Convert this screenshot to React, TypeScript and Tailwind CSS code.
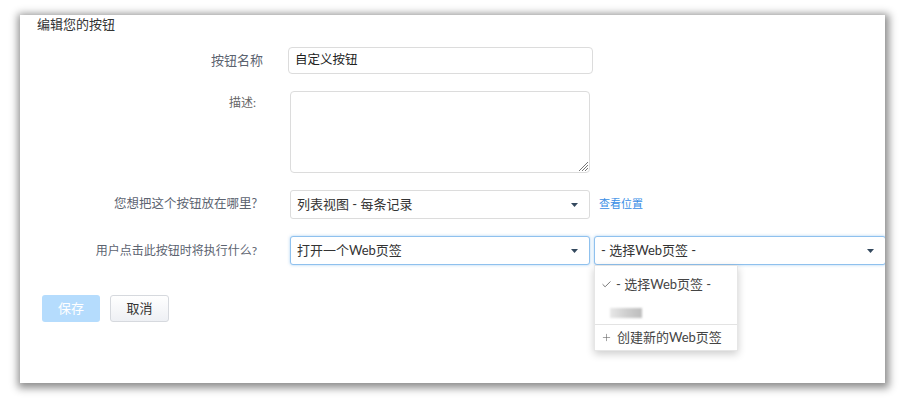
import { Check, Plus } from "lucide-react";

const font = { fontFamily: 'Lato, "Noto Sans CJK SC", sans-serif' };

function Caret() {
    return (
        <svg width="7" height="4" viewBox="0 0 7 4" className="shrink-0">
            <path d="M0 0 L7 0 L3.5 4 Z" fill="#34495e" />
        </svg>
    );
}

function Select({ value, focused, className }: { value: string; focused?: boolean; className: string }) {
    return (
        <div
            className={
                "shrink-0 flex items-center justify-between h-[29px] pl-[6px] pr-[11px] bg-white rounded-[3px] text-[13px] text-[#333] " +
                (focused
                    ? "border border-[#8fc1ee] shadow-[0_0_3px_rgba(82,160,230,0.5)] "
                    : "border border-[#dcdcdc] ") +
                className
            }
        >
            <span>{value}</span>
            <Caret />
        </div>
    );
}

function App() {
    return (
        <div className="w-[905px] h-[399px] bg-white overflow-hidden pt-[15px] pl-[20px]" style={font}>
            <div className="w-[865px] h-[368px] bg-white shadow-[1px_2px_8px_3px_rgba(0,0,0,0.45)] relative overflow-hidden">
                <div className="pl-[17px] pt-[1px] text-[13px] leading-[16px] text-[#333]">编辑您的按钮</div>

                {/* 按钮名称 */}
                <div className="flex items-center mt-[15px]">
                    <div className="w-[243px] shrink-0 text-right text-[13px] text-[#5c6370]">按钮名称</div>
                    <div className="ml-[25px] w-[305px] h-[27px] border border-[#dcdcdc] rounded-[4px] flex items-center pl-[6px] text-[12.5px] text-[#222]">
                        自定义按钮
                    </div>
                </div>

                {/* 描述 */}
                <div className="flex items-start mt-[17px]">
                    <div className="w-[237px] shrink-0 text-right text-[12px] text-[#666] pt-[3px] pr-[1px]">描述:</div>
                    <div className="ml-[33px] w-[300px] h-[82px] border border-[#dcdcdc] rounded-[4px] relative">
                        <svg width="10" height="10" viewBox="0 0 10 10" className="absolute right-[1px] bottom-[1px]">
                            <path d="M10 1 L1 10 M10 4 L4 10 M10 7 L7 10" stroke="#777" strokeWidth="1" />
                        </svg>
                    </div>
                </div>

                {/* 放在哪里 */}
                <div className="flex items-center mt-[17px]">
                    <div className="w-[237px] shrink-0 text-right text-[12.5px] text-[#5c6370]">您想把这个按钮放在哪里?</div>
                    <Select value="列表视图 - 每条记录" className="ml-[33px] w-[300px]" />
                    <span className="ml-[9px] text-[11px] text-[#3a8ee6]">查看位置</span>
                </div>

                {/* 执行什么 */}
                <div className="flex items-center mt-[17px]">
                    <div className="w-[237px] shrink-0 text-right text-[12px] text-[#5c6370]">用户点击此按钮时将执行什么?</div>
                    <Select value="打开一个Web页签" focused className="ml-[33px] w-[300px]" />
                    <div className="ml-[4px] relative shrink-0">
                        <Select value="- 选择Web页签 -" focused className="w-[292px] pr-[7px]" />
                        <div className="absolute left-0 top-[29px] w-[144px] bg-white border border-[#e6e6e6] shadow-[0_3px_8px_rgba(0,0,0,0.2)] text-[13px] text-[#444] z-10">
                            <div className="flex items-center h-[36px] pl-[6px] pt-[1px]">
                                <Check size={11} strokeWidth={1.6} className="text-[#444]" />
                                <span className="ml-[4px]">- 选择Web页签 -</span>
                            </div>
                            <div className="flex items-center h-[22px] pl-[15px]">
                                <div className="w-[32px] h-[10px] bg-gradient-to-r from-[#e8e8e8] via-[#cfcfcf] to-[#bdbdbd] blur-[1px]" />
                            </div>
                            <div className="border-t border-[#e3e3e3] flex items-center h-[26px] pl-[6px]">
                                <Plus size={11} strokeWidth={1.3} className="text-[#666]" />
                                <span className="ml-[5px]">创建新的Web页签</span>
                            </div>
                        </div>
                    </div>
                </div>

                {/* buttons */}
                <div className="flex items-center mt-[30px] pl-[22px] gap-[10px]">
                    <div className="w-[58px] h-[27px] rounded-[3px] bg-[#b5dcfd] text-white text-[13px] flex items-center justify-center">
                        保存
                    </div>
                    <div className="w-[59px] h-[27px] rounded-[3px] border border-[#d6d9de] bg-gradient-to-b from-white to-[#eef0f4] text-[#333] text-[13px] flex items-center justify-center">
                        取消
                    </div>
                </div>
            </div>
        </div>
    );
}

export default App;
